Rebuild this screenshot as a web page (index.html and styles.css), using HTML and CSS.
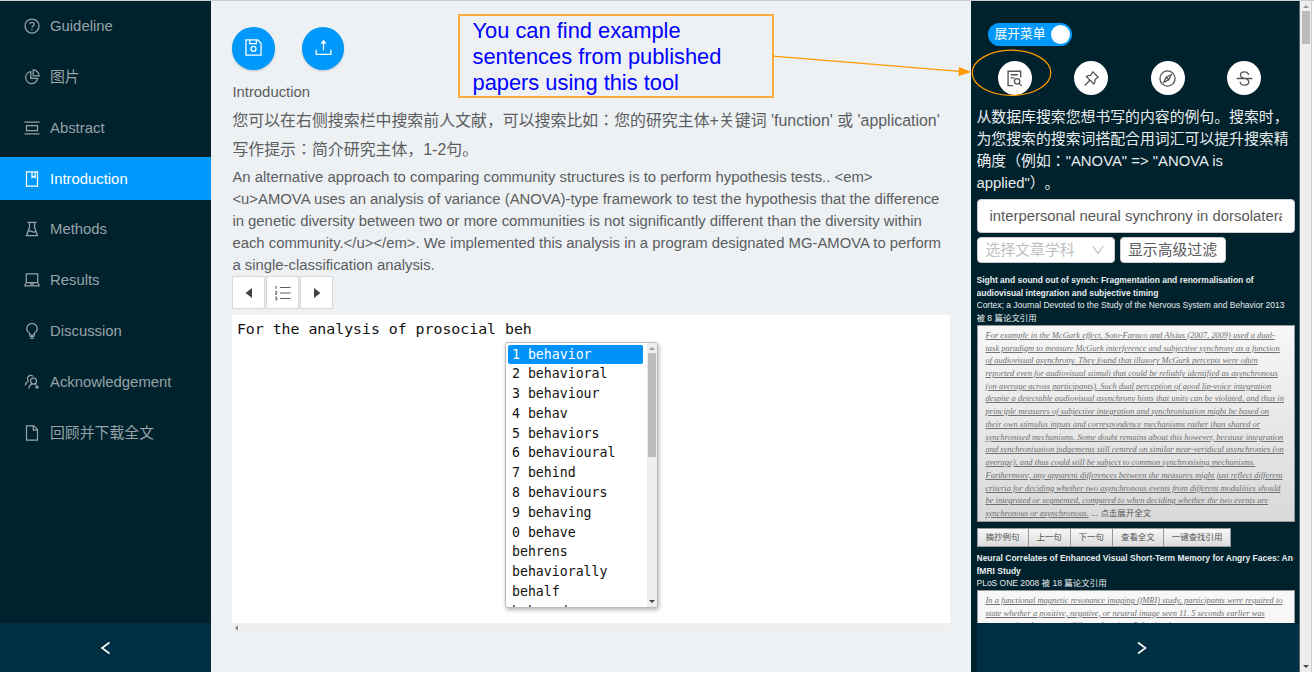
FILE: index.html
```html
<!DOCTYPE html>
<html lang="en">
<head>
<meta charset="utf-8">
<title>Introduction</title>
<link rel="stylesheet" href="styles.css">
</head>
<body>
<div class="app">
  <aside class="sider">
    <nav class="menu">
      <a class="item"><svg class="ico" viewBox="0 0 16 16"><circle cx="8" cy="8" r="7"/><path d="M5.8 6.3a2.2 2 0 1 1 3.2 1.8Q8 8.6 8 9.6M8 11v1.2"/></svg>Guideline</a>
      <a class="item"><svg class="ico" viewBox="0 0 16 16"><path d="M6.8 2.6a6 6 0 1 0 6.8 6.8H6.8z"/><path d="M9.2.9v6h6A6.2 6.2 0 0 0 9.200.9z"/></svg>图片</a>
      <a class="item"><svg class="ico" viewBox="0 0 16 16"><path d="M.5 2.200h15M.5 13.800h15M2.500 5.500h11v5h-11z"/></svg>Abstract</a>
      <a class="item active"><svg class="ico" viewBox="0 0 16 16"><path d="M2.500.8h11v14.400h-11zM8 1v5.500l1.600-1.300L11.200 6.500V1"/></svg>Introduction</a>
      <a class="item"><svg class="ico" viewBox="0 0 16 16"><path d="M3.500 1.300h9M5.500 1.300v5L2.500 14.700h11L10.500 6.300v-5M4 10.500q2-1.300 4 0t4.200-.2"/></svg>Methods</a>
      <a class="item"><svg class="ico" viewBox="0 0 16 16"><path d="M2.300 1.800h11.400v8.700H2.300zM2.300 10.500L.8 13.800h14.400l-1.500-3.300M6 12.200h4"/></svg>Results</a>
      <a class="item"><svg class="ico" viewBox="0 0 16 16"><path d="M5.700 12v-1.700a5.200 5.200 0 1 1 4.600 0V12zM5.700 13.500h4.600M6.500 15.300h3"/></svg>Discussion</a>
      <a class="item"><svg class="ico" viewBox="0 0 16 16"><circle cx="9.500" cy="7" r="3"/><path d="M8.500 9.800Q5.300 10.700 4.800 14.500M10.600 9.800l1.500 1.300M4.500 7A3 3 0 1 1 9 2.400M4.500 7Q1.800 8.500 1.300 11.500M11 13h4M13 11v4"/></svg>Acknowledgement</a>
      <a class="item"><svg class="ico" viewBox="0 0 16 16"><path d="M2.500.8h7.300l3.700 3.700v10.700h-11zM9.300 1v4h4"/></svg>回顾并下载全文</a>
    </nav>
    <div class="trigger"><svg class="chev" viewBox="0 0 12 14"><path d="M9.500 1.500L2 7 9.500 12.500"/></svg></div>
  </aside>

  <main class="main">
    <div class="actions">
      <button class="round"><svg class="act" viewBox="0 0 18 18"><path d="M1 1h12.500L17 4.500V17H1zM5 1v4h7V1"/><circle cx="9" cy="10.500" r="2.600"/></svg></button>
      <button class="round"><svg class="act" viewBox="0 0 18 18"><path d="M9 12V2.500M1.200 11.500v4.700h15.600v-4.700"/><path class="solid" d="M5.800 4.800L9 .8l3.200 4z"/></svg></button>
    </div>
    <div class="title">Introduction</div>
    <div class="tips"><p>您可以在右侧搜索栏中搜索前人文献，可以搜索比如：您的研究主体+关键词 'function' 或 'application'</p><p>写作提示：简介研究主体，1-2句。</p></div>
    <div class="sample">An alternative approach to comparing community structures is to perform hypothesis tests.. &lt;em&gt;<br>&lt;u&gt;AMOVA uses an analysis of variance (ANOVA)-type framework to test the hypothesis that the difference<br>in genetic diversity between two or more communities is not significantly different than the diversity within<br>each community.&lt;/u&gt;&lt;/em&gt;. We implemented this analysis in a program designated MG-AMOVA to perform<br>a single-classification analysis.</div>
    <div class="pager">
      <button class="sq"><svg class="tri" viewBox="0 0 10 12"><path d="M8 1v10L1.500 6z"/></svg></button>
      <button class="sq"><svg class="list" viewBox="0 0 16 16"><path d="M5 2.500h10.500M5 8h10.500M5 13.500h10.500"/><path class="num" d="M1.200 1v3M.5 1.300h.7M.3 6.500h1.500V8H.5v1.500h1.500M.3 12h1.500v3H.3M.5 13.500h1.300"/></svg></button>
      <button class="sq"><svg class="tri" viewBox="0 0 10 12"><path d="M2 1v10L8.500 6z"/></svg></button>
    </div>
    <div class="editor">For the analysis of prosocial beh
      <div class="popup">
        <ul class="words">
          <li class="on">1 behavior</li><li>2 behavioral</li><li>3 behaviour</li><li>4 behav</li><li>5 behaviors</li><li>6 behavioural</li><li>7 behind</li><li>8 behaviours</li><li>9 behaving</li><li>0 behave</li><li>behrens</li><li>behaviorally</li><li>behalf</li><li>behaved</li>
        </ul>
        <div class="bar"><i class="up"></i><i class="thumb"></i><i class="down"></i></div>
      </div>
    </div>
    <div class="hbar"><i class="left"></i></div>
  </main>

  <aside class="tools">
    <div class="content">
      <div class="switch"><span>展开菜单</span><i></i></div>
      <div class="toolrow">
        <button class="tool"><svg viewBox="0 0 18 18"><path d="M7.500 16.500H2.200V1.300h13.300V8M5 5h7.500M5 8.300h4"/><circle cx="11.800" cy="12" r="2.900"/><path d="M14 14.200l2.700 2.600"/></svg></button>
        <button class="tool"><svg viewBox="0 0 18 18"><path d="M10.500 2l5.600 5.600-3.300 2.500q.3 2.700-1.300 4.700L3.700 7q2-1.600 4.500-1.300zM7 11.200L1.800 16.500"/></svg></button>
        <button class="tool"><svg viewBox="0 0 18 18"><circle cx="9" cy="9" r="8"/><path d="M13 5L7.600 7.600 5 13l5.400-2.600zM7.600 7.600l2.800 2.800"/></svg></button>
        <button class="tool"><svg viewBox="0 0 18 18"><path d="M.7 9h16.600M13.300 5.300C13 2.800 11 2 9 2 6.500 2 4.700 3.300 4.700 5.300c0 5 8.800 2.300 8.800 7.200 0 2.200-1.900 3.600-4.400 3.600-2.600 0-4.500-1.300-4.700-3.700"/></svg></button>
      </div>
      <div class="intro">从数据库搜索您想书写的内容的例句。搜索时，<br>为您搜索的搜索词搭配合用词汇可以提升搜索精<br>确度（例如："ANOVA" =&gt; "ANOVA is<br>applied"）。</div>
      <div class="search"><div>interpersonal neural synchrony in dorsolateral</div></div>
      <div class="filters"><div class="select">选择文章学科<svg viewBox="0 0 12 10"><path d="M.8 1L6 8.500 11.200 1"/></svg></div><button class="adv">显示高级过滤</button></div>
      <div class="meta"><b>Sight and sound out of synch: Fragmentation and renormalisation of<br>audiovisual integration and subjective timing</b><br>Cortex; a Journal Devoted to the Study of the Nervous System and Behavior 2013<br>被 8 篇论文引用</div>
      <div class="quote"><em>For example in the McGurk effect, Soto-Faraco and Alsius (2007, 2009) used a dual-<br>task paradigm to measure McGurk interference and subjective synchrony as a function<br>of audiovisual asynchrony. They found that illusory McGurk percepts were often<br>reported even for audiovisual stimuli that could be reliably identified as asynchronous<br>(on average across participants). Such dual perception of good lip-voice integration<br>despite a detectable audiovisual asynchrony hints that unity can be violated, and thus in<br>principle measures of subjective integration and synchronisation might be based on<br>their own stimulus inputs and correspondence mechanisms rather than shared or<br>synchronised mechanisms. Some doubt remains about this however, because integration<br>and synchronisation judgements still centred on similar near-veridical asynchronies (on<br>average), and thus could still be subject to common synchronising mechanisms.<br>Furthermore, any apparent differences between the measures might just reflect different<br>criteria for deciding whether two asynchronous events from different modalities should<br>be integrated or segmented, compared to when deciding whether the two events are<br>synchronous or asynchronous.</em><span class="more"> ... 点击展开全文</span></div>
      <div class="ops"><button class="op w1">摘抄例句</button><button class="op w2">上一句</button><button class="op w2">下一句</button><button class="op w1">查看全文</button><button class="op w3">一键查找引用</button></div>
      <div class="meta"><b>Neural Correlates of Enhanced Visual Short-Term Memory for Angry Faces: An<br>fMRI Study</b><br>PLoS ONE 2008 被 18 篇论文引用</div>
      <div class="quote plain"><em>In a functional magnetic resonance imaging (fMRI) study, participants were required to<br>state whether a positive, negative, or neutral image seen 11. 5 seconds earlier was<br>presented at the same or different location. Behavioral</em></div>
    </div>
    <div class="trigger"><svg class="chev" viewBox="0 0 12 14"><path d="M2 1.500L9.500 7 2 12.500"/></svg></div>
  </aside>
  <div class="pagebar"><i class="up"></i><i class="thumb"></i><i class="down"></i></div>
</div>

<div class="note">You can find example<br>sentences from published<br>papers using this tool</div>
<svg class="marks" viewBox="0 0 1314 675"><path class="line" d="M773 56.200L960 71.300"/><path class="head" d="M959 67l12.500 5L958.500 76z"/><ellipse class="line" cx="1011.500" cy="72.800" rx="39.300" ry="22.600"/></svg>
</body>
</html>
```

FILE: styles.css
```css
* { box-sizing: border-box; }
body { margin: 0; width: 1314px; height: 675px; overflow: hidden; position: relative; background: #fff; color: #5b5d5f; font: 14.870px/22px "Liberation Sans", "Noto Sans CJK JP", sans-serif; white-space: nowrap; text-spacing-trim: space-all; }
button { font: inherit; color: inherit; border: 0; padding: 0; margin: 0; display: flex; align-items: center; justify-content: center; }
p { margin: 0; }
svg { fill: none; stroke: currentColor; flex: none; }
.app { display: flex; height: 672px; border-top: 1px solid #ccc; }

.sider { width: 211px; background: #00222d; display: flex; flex-direction: column; flex: none; }
.menu { flex: 1; padding-top: 3.800px; display: flex; flex-direction: column; gap: 8.480px; }
.item { height: 42.400px; display: flex; align-items: center; gap: 10px; padding-left: 24px; color: #97a3a8; }
.item.active { background: #0099fb; color: #fff; }
.ico { width: 16px; height: 16px; stroke-width: 1.250; }
.trigger { height: 49px; background: #002e42; display: flex; align-items: center; justify-content: center; color: #fff; flex: none; }
.chev { width: 12px; height: 14px; stroke-width: 1.600; }

.main { width: 760px; flex: none; background: #edf1f4; padding: 26px 21px 0 21.400px; display: flex; flex-direction: column; align-items: flex-start; }
.actions { display: flex; gap: 27px; height: 54px; }
.round { width: 42.500px; height: 42.500px; border-radius: 50%; background: #0099fb; color: #fff; box-shadow: 0 1px 2px rgba(0,0,0,.2); }
.act { width: 17px; height: 17px; stroke-width: 1.350; margin-top: -2px; }
.solid { fill: currentColor; stroke: none; }
.title { height: 22px; }
.tips { font-size: 15.920px; line-height: 29px; padding-top: 3px; height: 63px; }
.sample { height: 110px; }
.pager { display: flex; gap: 1px; height: 39px; }
.sq { width: 33px; height: 33px; background: #fff; border: 1px solid #d9d9d9; border-radius: 2px; box-shadow: 0 0 1px rgba(0,0,0,.15); }
.tri { width: 10px; height: 12px; fill: #444; stroke: none; }
.list { width: 16px; height: 16px; stroke-width: 1.100; }
.num { stroke-width: .9; }
.editor { position: relative; width: 718px; height: 308px; background: #fff; color: #111; font: 14.850px/28px "DejaVu Sans Mono", monospace; padding-left: 4.500px; }
.popup { position: absolute; left: 272.600px; top: 26.500px; width: 153px; height: 266px; background: #fff; border: 1px solid #bbb; border-radius: 3px; box-shadow: 1px 2px 4px rgba(0,0,0,.3); display: flex; overflow: hidden; }
.words { list-style: none; margin: 0; padding: 2px 4px 0 2px; flex: 1; font-size: 13.220px; line-height: 19.800px; }
.words li { height: 19.800px; padding-left: 4px; border-radius: 2px; }
.words .on { background: #0092fb; color: #fff; }
.bar { width: 10px; background: #eee; display: flex; flex-direction: column; align-items: center; }
.bar .thumb { width: 8px; height: 104px; background: #bdbdbd; margin: 3px 0 auto; }
.up, .down, .left { width: 0; height: 0; border: 3px solid transparent; flex: none; }
.up { border-top: 0; border-bottom-color: #999; margin-top: 4px; }
.down { border-bottom: 0; border-top-color: #444; margin-bottom: 4px; }
.hbar { width: 718px; height: 11px; background: #efefef; padding: 2px 0 0 3px; }
.left { display: block; border-left-width: 0; border-right-color: #888; }

.tools { width: 329px; flex: none; background: #00222d; display: flex; flex-direction: column; padding-left: 6px; color: #e8ecee; border-right: 1px solid #54656c; }
.tools .trigger { padding-left: 7px; }
.content { height: 622px; overflow: hidden; padding-top: 21.500px; margin-left: -.500px; }
.switch { width: 84px; height: 23px; margin-left: 11px; border-radius: 12px; background: #0099fb; color: #fff; font-size: 12.720px; display: flex; align-items: center; justify-content: space-between; padding: 0 2px 0 7px; }
.switch i { width: 19px; height: 19px; border-radius: 50%; background: #fff; }
.toolrow { display: flex; gap: 42.500px; padding: 15.500px 0 0 21.300px; height: 60.500px; }
.tool { width: 34px; height: 34px; border-radius: 50%; background: #fff; color: #555; }
.tool svg { width: 17px; height: 17px; stroke-width: 1.400; }
.intro { height: 92.500px; }
.search { width: 318px; height: 34px; background: #fff; color: #595959; border: 1px solid #ccc; border-radius: 4px; padding: 0 12px; display: flex; align-items: center; }
.search div { overflow: hidden; width: 293px; }
.filters { display: flex; gap: 5px; padding-top: 4.500px; height: 41.500px; }
.select, .adv { height: 26px; background: #fff; border: 1px solid #ccc; border-radius: 4px; color: #595959; display: flex; align-items: center; }
.select { width: 138px; color: #bfbfbf; padding: 0 10px 0 8px; justify-content: space-between; }
.select svg { width: 12px; height: 10px; stroke-width: 1.200; }
.adv { width: 106px; }
.meta { font-size: 8.490px; line-height: 12.720px; }
.quote { width: 318px; height: 197.500px; border: 1px solid #999; background: linear-gradient(#f7f7f7, #d9d9d9); color: #707070; padding: 3px 8px; font-size: 8.480px; line-height: 12.720px; }
.quote em { font-family: "Liberation Serif", serif; text-decoration: underline; }
.quote.plain { background: #f7f7f7; height: 60px; }
.more { color: #555; }
.ops { display: flex; height: 29.500px; padding-top: 5.500px; }
.op { height: 19px; border: 1px solid #999; background: linear-gradient(#f7f7f7, #dcdcdc); color: #555; font-size: 8.480px; margin-right: -1px; padding-bottom: 1px; }
.w1 { width: 52px; }
.w2 { width: 43.200px; }
.w3 { width: 68.500px; }

.pagebar { width: 12px; background: #eee; display: flex; flex-direction: column; align-items: center; border-right: 1px solid #ccc; }
.pagebar .thumb { width: 8px; height: 33px; background: #bbb; margin: 3px 0 auto; }

.note { position: absolute; left: 458px; top: 14px; width: 316px; height: 84px; border: 2px solid #fcac40; padding: 2px 12.500px; color: #00f; font-size: 21.850px; line-height: 26px; background: #edf1f4; }
.marks { position: absolute; left: 0; top: 0; width: 1314px; height: 675px; pointer-events: none; }
.line { stroke: #f90; stroke-width: 1.300; }
.head { fill: #f90; stroke: none; }
```
